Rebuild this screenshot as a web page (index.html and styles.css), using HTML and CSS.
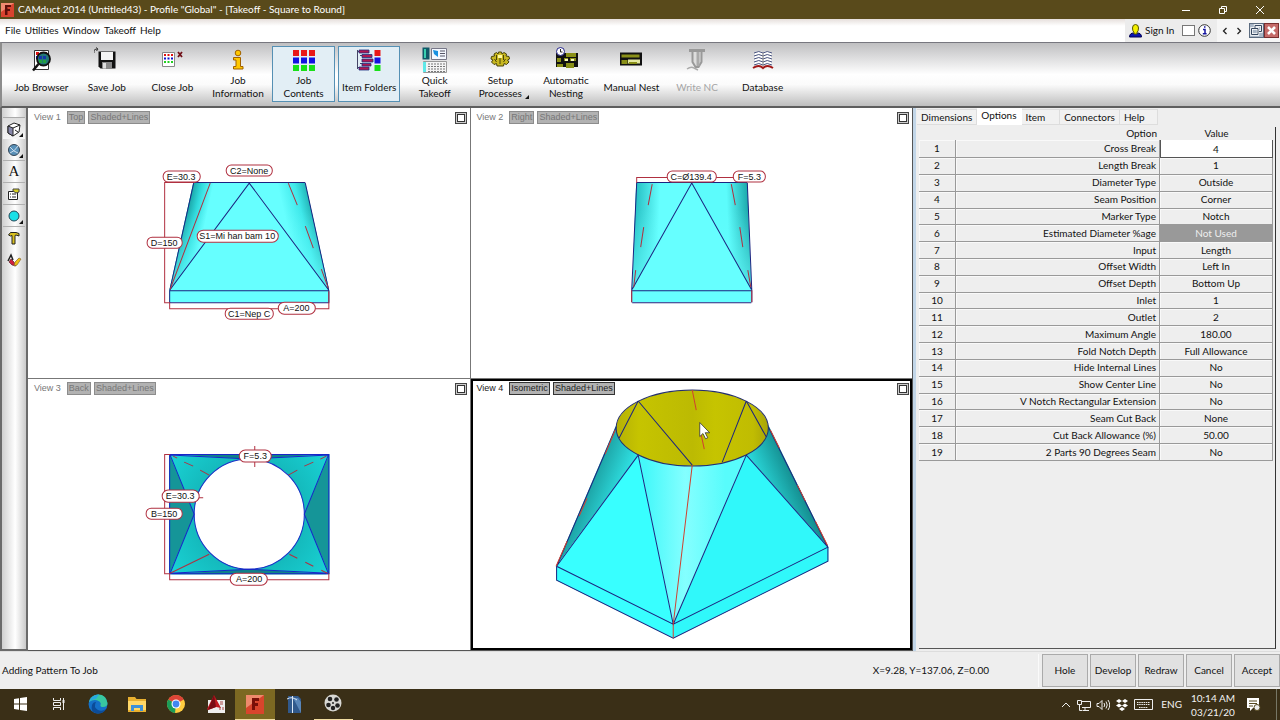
FILE: index.html
```html
<!DOCTYPE html>
<html lang="en">
<head>
<meta charset="utf-8">
<title>CAMduct 2014</title>
<link rel="stylesheet" href="styles.css">
</head>
<body>
<div class="app">
<header class="titlebar">
  <svg class="app-logo" viewBox="0 0 13 14"><rect width="13" height="14" fill="#d8432f"/><path d="M0 0h13L0 9z" fill="#f08a70"/><path d="M4 2h6v2H6.500v2H9v2H6.500v4H4z" fill="#5c0e0a"/></svg>
  <h1 class="title">CAMduct 2014 (Untitled43) - Profile "Global" - [Takeoff - Square to Round]</h1>
  <div class="win-controls">
    <button type="button" aria-label="Minimize"><svg viewBox="0 0 10 10"><path d="M1 5.500h8" stroke="#fff" fill="none"/></svg></button>
    <button type="button" aria-label="Restore"><svg viewBox="0 0 10 10"><path d="M1.500 3.500h5v5h-5zM3.500 3V1.500h5v5H7" stroke="#fff" fill="none"/></svg></button>
    <button type="button" aria-label="Close"><svg viewBox="0 0 10 10"><path d="M1 1l8 8M9 1L1 9" stroke="#fff" fill="none"/></svg></button>
  </div>
</header>

<nav class="menubar">
  <div class="menus">
    <button type="button">File</button><button type="button">Utilities</button><button type="button">Window</button><button type="button">Takeoff</button><button type="button">Help</button>
  </div>
  <div class="account">
    <button type="button" class="signin"><svg width="13" height="14" viewBox="0 0 13 14"><path d="M0.500 13c0-3 2-4 4-4h4c2 0 4 1 4 4z" fill="#0a14b0" stroke="#000050"/><path d="M3.500 4q0-3.500 3-3.500t3 3.500q0 3-1.500 4.500v1.500h-3V8.500Q3.500 7 3.500 4z" fill="#f4f000" stroke="#555500"/></svg>Sign In</button>
    <input class="blank" type="text" aria-label="Search">
    <button type="button" class="info" aria-label="Information"><svg width="13" height="13" viewBox="0 0 13 13"><circle cx="6.500" cy="6.500" r="5.800" fill="#fff" stroke="#333"/><path d="M5 5.500h2V9.500M4.800 9.700h3.800M6 3h1.500" stroke="#1414a0" stroke-width="1.500" fill="none"/></svg></button>
  </div>
  <div class="mdi">
    <button type="button" aria-label="Previous"><svg width="8" height="8" viewBox="0 0 8 8"><path d="M5.500 1L2.500 4l3 3" stroke="#222" stroke-width="1.300" fill="none"/></svg></button>
    <button type="button" aria-label="Next"><svg width="8" height="8" viewBox="0 0 8 8"><path d="M2.500 1l3 3-3 3" stroke="#222" stroke-width="1.300" fill="none"/></svg></button>
    <div class="mdi-pair">
    <button type="button" aria-label="Restore window"><svg width="15" height="15" viewBox="0 0 15 15"><rect x=".5" y=".5" width="14" height="14" fill="#a9b6c6" stroke="#5c6c80"/><path d="M6 5V2.500h6.500v6H10M2.500 5.500h6.500v6H2.500z" stroke="#fff" stroke-width="2.400" fill="none"/><path d="M6 5V2.500h6.500v6H10M2.500 5.500h6.500v6H2.500z" stroke="#34465e" fill="none"/></svg></button>
    <button type="button" aria-label="Close window"><svg width="15" height="15" viewBox="0 0 15 15"><rect x=".5" y=".5" width="14" height="14" fill="#c46a68" stroke="#7a3030"/><path d="M4 4l7 7M11 4l-7 7" stroke="#fff" stroke-width="2.600"/></svg></button>
    </div>
  </div>
</nav>

<div class="toolbar">
  <div class="tools">
    <button type="button" class="tool"><svg viewBox="0 0 26 26"><path d="M6.500 3.500h14v19h-14z" fill="#fff" stroke="#333"/><path d="M8 5h3v3H8z" fill="#e01010"/><path d="M12.500 5h3v3h-3zM17 5h2v3h-2z" fill="#e01010"/><path d="M8 9h3v3H8z" fill="#1010d0"/><circle cx="15.500" cy="12" r="6.500" fill="#277" stroke="#111" stroke-width="1.800"/><path d="M11 9h3v3h-3zM15 9h3v3h-3z" fill="#1436a8"/><path d="M11 13h3v3h-3zM15 13h3v3h-3z" fill="#20a040"/><path d="M10.500 17L5 23.500" stroke="#111" stroke-width="2.500"/></svg><span>Job Browser</span></button>
    <button type="button" class="tool"><svg viewBox="0 0 26 26"><path d="M4.500 4.500h17v17h-15l-2-2z" fill="#111"/><path d="M7 5h12v8H7z" fill="#f4f4f4"/><path d="M8 15h10v6.500H8z" fill="#888"/><path d="M9 16h3v5.500H9z" fill="#ddd"/><path d="M0 6V4q0-2 3-2M2 .5L4 2 2.500 4" stroke="#333" fill="none"/></svg><span>Save Job</span></button>
    <button type="button" class="tool"><svg viewBox="0 0 26 26"><path d="M3.500 5.500h12v14h-12z" fill="#fff" stroke="#888"/><path d="M5 7h2v2H5zM8.500 7h2v2h-2zM12 7h2v2h-2z" fill="#e01010"/><path d="M5 10.500h2v2H5zM8.500 10.500h2v2h-2zM12 10.500h2v2h-2z" fill="#1010d0"/><path d="M5 14h2v2H5zM8.500 14h2v2h-2zM12 14h2v2h-2z" fill="#20d020"/><path d="M19 5l4 5M23 5l-4 5" stroke="#701018" stroke-width="1.800"/></svg><span>Close Job</span></button>
    <button type="button" class="tool"><svg viewBox="0 0 26 26"><circle cx="13" cy="6" r="2.800" fill="#ffc800" stroke="#a06000"/><path d="M8.500 10.500h7v9H18v2.500H8.500v-2.500H11V13H8.500z" fill="#ffc800" stroke="#a06000"/></svg><span>Job<br>Information</span></button>
    <button type="button" class="tool pressed"><svg viewBox="0 0 26 26"><path d="M2 3h6v6H2zM10 3h6v6h-6zM18 3h6v6h-6z" fill="#e81818"/><path d="M2 10.500h6v6H2zM10 10.500h6v6h-6zM18 10.500h6v6h-6z" fill="#1212e0"/><path d="M2 18h6v6H2zM10 18h6v6h-6zM18 18h6v6h-6z" fill="#18e018"/></svg><span>Job<br>Contents</span></button>
    <button type="button" class="tool pressed"><svg viewBox="0 0 26 26"><path d="M1.500 3v19M1.500 4.500H4M1.500 20.500H4M4 8.500h3M4 16.500h3" stroke="#446" fill="none"/><path d="M3 3h10v3H3zM6 7.500h10v3H6zM6 12h11v3H6zM6 16.500h9v2.500H6zM3 20h10v3H3z" fill="#b01850" stroke="#203080" stroke-width=".8"/><path d="M18.500 3h6v6h-6z" fill="#e81818"/><path d="M18.500 10.500h6v6h-6z" fill="#1212e0"/><path d="M18.500 18h6v6h-6z" fill="#18e018"/></svg><span>Item Folders</span></button>
    <button type="button" class="tool"><svg viewBox="0 0 26 26"><path d="M.5.5h7v12h-7z" fill="#105868"/><path d="M2 2h2v9H2z" fill="#39d0b0"/><path d="M9.500 1.500h15v11h-15z" fill="#f4f8ff" stroke="#778"/><path d="M11 3l5 1v6l-4-3z" fill="#1890e0"/><path d="M18 4h5M18 6.500h5M18 9h5" stroke="#556"/><path d="M1.500 14.500h23v11h-23z" fill="#f4f4f4" stroke="#999"/><path d="M1 15h3v10H1z" fill="#60e8e8"/><path d="M6 17h18M6 19.500h18M6 22h18M6 24.500h18" stroke="#777" stroke-dasharray="2 1"/></svg><span>Quick<br>Takeoff</span></button>
    <button type="button" class="tool has-more"><svg viewBox="0 0 26 26"><path d="M11.500 5h3l.5 2 2-1.500 2.500 1.500-.5 2 3 .5.500 2.500-2 1 1.500 2-2.500 2.500-2.500-1-.5 2.500h-6.500l-.5-2.500-2.500 1L4.500 15 6 13l-2-1 .5-2.500 3-.5L7 7l2.500-1.500 1.500 1.500z" fill="#c8b820" stroke="#4a4408"/><path d="M9.500 8v5M16.500 8v5M13 11v6M7.500 12l2 3M18.500 12l-2 3" stroke="#4a4408"/><path d="M11 8h4v3h-4z" fill="#fff8a0"/></svg><span>Setup<br>Processes</span></button>
    <button type="button" class="tool"><svg viewBox="0 0 26 26"><path d="M3 6h22v14H3z" fill="#111"/><path d="M13 6h10v4H13zM4 11h4v4H4zM11 11h4v3h-4zM17 11h6v3h-6zM13 16h8v5h-8zM4 17h6v3H4z" fill="#8a9018"/><path d="M12 12h3v2h-3zM18 12h3v2h-3z" fill="#f8f8c0"/><circle cx="7.500" cy="4.500" r="4" fill="#fff" stroke="#22228a"/><path d="M7.500 2v3h2" stroke="#222" fill="none"/></svg><span>Automatic<br>Nesting</span></button>
    <button type="button" class="tool"><svg viewBox="0 0 26 26"><path d="M2 5.500h22v13H2z" fill="#111"/><path d="M3.500 7.500h18v3h-18zM3.500 13h6v4h-6z" fill="#8a9018"/><path d="M10 12.500h12v4H10z" fill="#e4e8a0"/><path d="M11 15h8v2h-8z" fill="#8a9018"/></svg><span>Manual Nest</span></button>
    <button type="button" class="tool" disabled><svg viewBox="0 0 26 26"><path d="M5 3.500h16" stroke="#999" stroke-width="3"/><path d="M8.500 5v10l3 5h3l3-5V5" stroke="#999" stroke-width="2" fill="#ddd"/><path d="M14 5v14" stroke="#aaa" stroke-width="3"/><path d="M3 22q4-3 7-1l4 2" stroke="#aaa" stroke-width="1.500" fill="none"/></svg><span>Write NC</span></button>
    <button type="button" class="tool"><svg viewBox="0 0 26 26"><path d="M4.500 5.500q5-3 8.500 0 3.500-3 8.500 0v14q-5-3-8.500 1-3.500-4-8.500-1z" fill="#fff"/><path d="M4 6q5-3 9 0 4-3 9 0M4 9q5-3 9 0 4-3 9 0M4 12q5-3 9 0 4-3 9 0M4 15q5-3 9 0 4-3 9 0M4 18q5-3 9 0 4-3 9 0" stroke="#45507c" fill="none"/><path d="M13 6v13" stroke="#888"/><path d="M3 21q6-4 10 0 4-4 10 0" stroke="#a01818" stroke-width="2" fill="none"/></svg><span>Database</span></button>
  </div>
</div>

<main class="workspace">
  <div class="sidebar">
    <button type="button" aria-label="View cube" class="more raised"><svg viewBox="0 0 16 16"><path d="M2 5l6-3 6 2-1 7-6 4-5-3z" fill="#fff" stroke="#222"/><path d="M2 5l5 2v8l-5-3z" fill="#88a" stroke="#222"/><path d="M7 7l7-3M9 9l3 2" stroke="#222"/></svg></button>
    <button type="button" aria-label="Shading" class="more ruled"><svg viewBox="0 0 16 16"><circle cx="8" cy="8" r="5.500" fill="#5890b8" stroke="#345"/><path d="M4 5q4 5 8 6M12 4q-3 5-8 7" stroke="#cde" fill="none"/></svg></button>
    <button type="button" aria-label="Text" class="ruled serif">A</button>
    <button type="button" aria-label="Properties" class="ruled"><svg viewBox="0 0 16 16"><path d="M2.500 5.500h9v8h-9z" fill="#fff" stroke="#222"/><path d="M4 8h1M6 8h4M4 11h1M6 11h4" stroke="#222"/><path d="M7 3h6v3l-3 1-3-2z" fill="#d8d020" stroke="#444"/></svg></button>
    <button type="button" aria-label="Colour" class="more ruled"><svg viewBox="0 0 16 16"><circle cx="8" cy="8" r="5" fill="#18e0e8" stroke="#245"/></svg></button>
    <button type="button" aria-label="Hammer"><svg viewBox="0 0 16 16"><path d="M2.500 5l2-2.500h5.500l3 1V6l-3-1-1 .5v8.500h-3V5.500L4.500 6z" fill="#d8c020" stroke="#222"/></svg></button>
    <button type="button" aria-label="Annotate"><svg viewBox="0 0 16 16"><path d="M2 9l3-6 2 5" stroke="#222" stroke-width="1.500" fill="none"/><path d="M3 10l2-3 3 3 2 4-4-1z" fill="#d02040" stroke="#411" stroke-width=".6"/><path d="M9 10l4-4 2 1-4 6-3 1z" fill="#f0c010" stroke="#863" stroke-width=".7"/></svg></button>
  </div>

  <div class="views">
    <section class="view">
      <div class="view-head"><span>View 1</span><button type="button">Top</button><button type="button">Shaded+Lines</button><button type="button" class="max" aria-label="Maximize view 1"></button></div>
      <svg class="drawing" viewBox="28 108 441 270">
        <defs>
          <linearGradient id="l1" gradientUnits="userSpaceOnUse" x1="188" y1="190" x2="211" y2="195"><stop offset="0" stop-color="#128f92"/><stop offset=".5" stop-color="#2fd8da"/><stop offset="1" stop-color="#66ffff"/></linearGradient>
          <linearGradient id="r1" gradientUnits="userSpaceOnUse" x1="310" y1="190" x2="280" y2="197"><stop offset="0" stop-color="#1aa6a8"/><stop offset=".45" stop-color="#3fe8ea"/><stop offset="1" stop-color="#66ffff"/></linearGradient>
          <linearGradient id="fade" x1="0" y1="0" x2="0" y2="1"><stop offset=".25" stop-color="#66ffff" stop-opacity="0"/><stop offset="1" stop-color="#66ffff" stop-opacity=".7"/></linearGradient>
        </defs>
        <path d="M193 183H305L329 291V302H169V291z" fill="#66ffff"/>
        <path d="M193 183H249L169 291z" fill="url(#l1)"/><path d="M305 183H249L329 291z" fill="url(#r1)"/>
        <path d="M193 183H305L329 291H169z" fill="url(#fade)"/>
        <path class="edge" d="M193.500 183L169.500 290.500V302M305 183L328.500 290.500V302M193 182.500H305M169 290.500H329M169 302.500H329M169.500 290L249 183L328.500 290"/>
        <path class="dim" d="M210 183L170 289M288 183l9 22M305 226l8 22M321 269l7 19M195 182.500H164.500V302.500H170M169.500 302V308.500H329M328.500 291V309"/>
        <g class="tag"><rect x="226" y="165" width="46" height="11" rx="5"/><text x="249" y="174">C2=None</text>
        <rect x="163" y="171" width="37" height="11" rx="5"/><text x="181" y="180">E=30.3</text>
        <rect x="197" y="230" width="81" height="12" rx="6"/><text x="237" y="239">S1=Mi han bam 10</text>
        <rect x="147" y="237" width="35" height="11" rx="5"/><text x="164" y="246">D=150</text>
        <rect x="225" y="308" width="48" height="11" rx="5"/><text x="249" y="317">C1=Nep C</text>
        <rect x="278" y="302" width="37" height="12" rx="6"/><text x="296" y="311">A=200</text></g>
      </svg>
    </section>
    <section class="view">
      <div class="view-head"><span>View 2</span><button type="button">Right</button><button type="button">Shaded+Lines</button><button type="button" class="max" aria-label="Maximize view 2"></button></div>
      <svg class="drawing" viewBox="471 108 441 270">
        <defs>
          <linearGradient id="l2" gradientUnits="userSpaceOnUse" x1="634" y1="190" x2="660" y2="191"><stop offset="0" stop-color="#22bcc0"/><stop offset="1" stop-color="#66ffff"/></linearGradient>
          <linearGradient id="r2" gradientUnits="userSpaceOnUse" x1="750" y1="190" x2="726" y2="191"><stop offset="0" stop-color="#159fa2"/><stop offset="1" stop-color="#5cfcfc"/></linearGradient>
        </defs>
        <path d="M636 183H747L751 290V302H632V290z" fill="#66ffff"/>
        <path d="M636 183H691L632 290z" fill="url(#l2)"/><path d="M747 183H691L751 290z" fill="url(#r2)"/>
        <path d="M636 183H747L751 290H632z" fill="url(#fade)"/>
        <path class="edge" d="M636.500 183L631.500 290.500V302M747 183L751.500 290.500V302M636 182.500H747M632 290.500H751M632 302.500H751M632 289L691.500 183L751 289"/>
        <path class="dim" d="M652 184l-4 21M643.500 227l-3 20M635.500 270l-2 17M731 184l4 21M739.500 227l3 20M747.500 270l3 17M636.500 183V177.500H740M631.500 290v12M751.500 290v12"/>
        <g class="tag"><rect x="667" y="171" width="49" height="11" rx="5"/><text x="691" y="180">C=Ø139.4</text>
        <rect x="733" y="171" width="32" height="11" rx="5"/><text x="749" y="180">F=5.3</text></g>
      </svg>
    </section>
    <section class="view">
      <div class="view-head"><span>View 3</span><button type="button">Back</button><button type="button">Shaded+Lines</button><button type="button" class="max" aria-label="Maximize view 3"></button></div>
      <svg class="drawing" viewBox="28 379 441 270">
        <defs><radialGradient id="c3" gradientUnits="userSpaceOnUse" cx="249" cy="514" r="96"><stop offset=".55" stop-color="#14b8bb"/><stop offset="1" stop-color="#19d2d4"/></radialGradient></defs>
        <path d="M169 454H329V574H169z" fill="url(#c3)"/>
        <path d="M169 454L194 514L169 574zM329 454L304 514L329 574z" fill="#159598"/>
        <path d="M169 454L249 459L329 454zM169 574L249 569L329 574z" fill="#0f8288"/>
        <circle cx="249" cy="514" r="55" fill="#fff" stroke="#1c2ec8"/>
        <path class="blue" d="M169.500 454.500H328.500V573.500H169.500zM170 455L194 514L170 573M328 455L304 514L328 573M170 455L249 459L328 455M170 573L249 569L328 573"/>
        <path class="dim" d="M173 456l4 2M184 462l9 4M200 470l9 5M326 456l-6 3M313 462l-9 4M297 470l-9 5M170 573L209 554M289 554l8 4M305 562l8 4M321 570l6 3M170 454.500H164.500V573.500H170M169.500 573V579.500H328.500V573M254.500 446v21M194 497.500h9"/>
        <g class="tag"><rect x="239" y="450" width="32" height="12" rx="6"/><text x="255" y="459">F=5.3</text>
        <rect x="162" y="490" width="37" height="12" rx="6"/><text x="180" y="499">E=30.3</text>
        <rect x="146" y="508" width="36" height="11" rx="5"/><text x="164" y="517">B=150</text>
        <rect x="230" y="573" width="37" height="12" rx="6"/><text x="249" y="582">A=200</text></g>
      </svg>
    </section>
    <section class="view active">
      <div class="view-head"><span>View 4</span><button type="button">Isometric</button><button type="button">Shaded+Lines</button><button type="button" class="max" aria-label="Maximize view 4"></button></div>
      <svg class="drawing" viewBox="473 381 437 266">
        <defs>
          <linearGradient id="l4" gradientUnits="userSpaceOnUse" x1="588" y1="478" x2="622" y2="492"><stop offset="0" stop-color="#1a9a9c"/><stop offset="1" stop-color="#30e4e6"/></linearGradient>
          <linearGradient id="m4" gradientUnits="userSpaceOnUse" x1="645" y1="500" x2="725" y2="500"><stop offset="0" stop-color="#45f8fa"/><stop offset=".5" stop-color="#84ffff"/><stop offset="1" stop-color="#58fcfc"/></linearGradient>
          <linearGradient id="r4" gradientUnits="userSpaceOnUse" x1="804" y1="490" x2="764" y2="508"><stop offset="0" stop-color="#128688"/><stop offset="1" stop-color="#2ee8ea"/></linearGradient>
          <linearGradient id="y4" x1="0" y1="0" x2="1" y2="0"><stop offset="0" stop-color="#b4b006"/><stop offset=".15" stop-color="#c6c400"/><stop offset=".5" stop-color="#bcba02"/><stop offset=".65" stop-color="#c6c400"/><stop offset=".9" stop-color="#c0bc02"/><stop offset="1" stop-color="#a8a408"/></linearGradient>
        </defs>
        <path d="M616 425L638 455L556 566z" fill="url(#l4)"/>
        <path d="M768 425L746 455L828 547z" fill="url(#r4)"/>
        <path d="M638 455L556 566V580L673 638V624z" fill="#38ffff"/>
        <path d="M746 455L828 547V561L673 638V624z" fill="#30f8fa"/>
        <path d="M638 455L692 466L746 455L673 624z" fill="url(#m4)"/>
        <ellipse cx="692" cy="428" rx="76" ry="38" fill="url(#y4)" stroke="#26306e"/>
        <path class="edge" d="M616 427L556.500 566V580L673 638L827.500 561V547L768 427M638 455L556.500 566L673 624L827.500 547L746 455L673 624zM638 401L692 465M638 401L619 438M746 401L722 462M746 401L766 437"/>
        <path class="seam" d="M692 465L673 624V638M692 390l4 20M701 435l3 14M615 430l-10 24M587 498l-8 18M567 541l-11 25M770 430l9 18M797 485l8 16M815 521l12 24"/>
        <path d="M699.500 422.500v14l3.200-3 2.600 5.200 2.200-1-2.600-5h4.500z" fill="#fff" stroke="#333" stroke-width=".8"/>
      </svg>
    </section>
  </div>

  <aside class="panel">
    <div class="tabs" role="tablist">
      <button type="button" role="tab">Dimensions</button><button type="button" role="tab" aria-selected="true" class="current">Options</button><button type="button" role="tab" class="wide">Item</button><button type="button" role="tab">Connectors</button><button type="button" role="tab" class="last">Help</button>
    </div>
    <div class="sheet">
      <table class="options">
        <colgroup><col class="c-num"><col><col class="c-val"></colgroup>
        <thead><tr><th></th><th>Option</th><th>Value</th></tr></thead>
        <tbody>
        <tr><td>1</td><td><label for="cross">Cross Break</label></td><td class="edit"><input id="cross" type="text" value="4"></td></tr>
        <tr><td>2</td><td>Length Break</td><td>1</td></tr>
        <tr><td>3</td><td>Diameter Type</td><td>Outside</td></tr>
        <tr><td>4</td><td>Seam Position</td><td>Corner</td></tr>
        <tr><td>5</td><td>Marker Type</td><td>Notch</td></tr>
        <tr><td>6</td><td>Estimated Diameter %age</td><td class="unused">Not Used</td></tr>
        <tr><td>7</td><td>Input</td><td>Length</td></tr>
        <tr><td>8</td><td>Offset Width</td><td>Left In</td></tr>
        <tr><td>9</td><td>Offset Depth</td><td>Bottom Up</td></tr>
        <tr><td>10</td><td>Inlet</td><td>1</td></tr>
        <tr><td>11</td><td>Outlet</td><td>2</td></tr>
        <tr><td>12</td><td>Maximum Angle</td><td>180.00</td></tr>
        <tr><td>13</td><td>Fold Notch Depth</td><td>Full Allowance</td></tr>
        <tr><td>14</td><td>Hide Internal Lines</td><td>No</td></tr>
        <tr><td>15</td><td>Show Center Line</td><td>No</td></tr>
        <tr><td>16</td><td>V Notch Rectangular Extension</td><td>No</td></tr>
        <tr><td>17</td><td>Seam Cut Back</td><td>None</td></tr>
        <tr><td>18</td><td>Cut Back Allowance (%)</td><td>50.00</td></tr>
        <tr><td>19</td><td>2 Parts 90 Degrees Seam</td><td>No</td></tr>
        </tbody>
      </table>
    </div>
  </aside>
</main>

<footer class="status">
  <span class="message">Adding Pattern To Job</span>
  <span class="coords">X=9.28, Y=137.06, Z=0.00</span>
  <div class="actions"><button type="button">Hole</button><button type="button">Develop</button><button type="button">Redraw</button><button type="button">Cancel</button><button type="button">Accept</button></div>
</footer>

<div class="taskbar">
  <div class="apps">
    <button type="button" aria-label="Start"><svg viewBox="0 0 20 20"><path d="M4 5l5-.8v5.300H4zM10 4l7-1v6.500h-7zM4 10.500h5v5.300L4 15zM10 10.500h7V17l-7-1z" fill="#fff"/></svg></button>
    <button type="button" aria-label="Task view"><svg viewBox="0 0 20 20"><path d="M4.500 4v2.500h7V4M4.500 16v-2.500h7V16M4.500 8.500h7v3h-7zM14.500 4v12" stroke="#eee" fill="none"/><path d="M13.500 6h2v3h-2z" fill="#eee"/></svg></button>
    <button type="button" aria-label="Edge"><svg viewBox="0 0 20 20"><circle cx="10" cy="10" r="9.500" fill="#1470c8"/><path d="M1 8Q3 .5 10.500.5T19.500 9q0 4-4.500 4-3 0-2.500-2 1-2-1-3.500Q6 4.500 1 8z" fill="#38c8a0"/><path d="M1 8Q4 1 11 .600L8 5Q4 5 1 8z" fill="#28a8e0"/><path d="M8 8q-3 5 2 8 4 2 8-1-3 5-9 4.500Q2 18 4 11q1-3 4-3z" fill="#0c4c98"/></svg></button>
    <button type="button" aria-label="File Explorer"><svg viewBox="0 0 20 20"><path d="M1 3h7l1.500 2H19v13H1z" fill="#e8b030"/><path d="M1 7h18v9H1z" fill="#ffd868"/><path d="M4 11h12v6h-3v-3H7v3H4z" fill="#3c90d8"/></svg></button>
    <button type="button" aria-label="Chrome"><svg viewBox="0 0 20 20"><circle cx="10" cy="10" r="9" fill="#ffcd40"/><path d="M10 10L2.200 5.500A9 9 0 0 1 17.800 5.500z" fill="#dc4437"/><path d="M10 10L2.200 5.500A9 9 0 0 0 9 19z" fill="#1a9c58"/><circle cx="10" cy="10" r="4.500" fill="#fff"/><circle cx="10" cy="10" r="3.400" fill="#4286f0"/></svg></button>
    <button type="button" aria-label="AutoCAD"><svg viewBox="0 0 20 20"><path d="M2 6h17v13H2z" fill="#eee"/><path d="M1 15L8 1l7 13-5-1-8 3z" fill="#c01820"/><path d="M8 1l2 12-8 3z" fill="#780c14"/><path d="M14 8h3M14 10h3M14 13v3M17 13v3" stroke="#a44"/></svg></button>
    <button type="button" aria-label="CAMduct" class="running on"><svg viewBox="0 0 20 20"><path d="M1 1h18v19H1z" fill="#d8452c"/><path d="M1 1h18L1 14z" fill="#ee8a6c"/><path d="M7 4h7v3h-4v2h3v3h-3v4H7z" fill="#781008"/></svg></button>
    <button type="button" aria-label="Design tool"><svg viewBox="0 0 20 20"><path d="M4 2h10l3 3v14H4z" fill="#31598c"/><path d="M9 4h5l3 4v11z" fill="#5a86b8"/><path d="M8.500 2v17M3 5q5-3 10 1" stroke="#dde8f4" fill="none"/></svg></button>
    <button type="button" aria-label="Media player" class="running"><svg viewBox="0 0 20 20"><circle cx="10" cy="9" r="8.500" fill="#d8d8d4"/><g fill="#222"><circle cx="7" cy="5" r="2.300"/><circle cx="13.500" cy="5.500" r="2.300"/><circle cx="5.500" cy="11" r="2.300"/><circle cx="14.500" cy="11.500" r="2.300"/><circle cx="10" cy="14" r="2.200"/><circle cx="10" cy="9" r="1"/></g></svg></button>
  </div>
  <div class="tray">
    <button type="button" aria-label="Show hidden icons"><svg width="12" height="14" viewBox="0 0 12 14"><path d="M2 9l4-4 4 4" stroke="#eee" fill="none"/></svg></button>
    <svg width="14" height="14" viewBox="0 0 14 14"><path d="M5 3.500h8.500v6H5M8 9.500v3M6 12.500h6M.5 2.500h4v4h-4zM2.500 6.500v6h3" stroke="#eee" fill="none"/></svg>
    <svg width="14" height="14" viewBox="0 0 14 14"><path d="M1 5.500h2l3-3v9l-3-3H1zM8 5q1.500 2 0 4M10 3.500q2.500 3.500 0 7M12 2q3.500 5 0 10" stroke="#eee" fill="none"/></svg>
    <svg width="14" height="14" viewBox="0 0 14 14"><path d="M4 1l3 2-3 2-3-2zM10 1l3 2-3 2-3-2zM4 5.500l3 2-3 2-3-2zM10 5.500l3 2-3 2-3-2zM7 9l3 2-3 2-3-2z" fill="#fff"/></svg>
    <svg width="19" height="14" viewBox="0 0 19 14"><path d="M.5 1.500h18v10H.5z" stroke="#eee" fill="none"/><path d="M3 4.500h13M3 6.500h13M5 9.500h9" stroke="#eee" stroke-dasharray="1.500 .7"/></svg>
    <span class="lang">ENG</span>
    <time class="clock">10:14 AM<br>03/21/20</time>
    <button type="button" aria-label="Notifications" class="notes"><svg width="15" height="15" viewBox="0 0 15 15"><path d="M1 1h12v10H7l-3 3v-3H1z" fill="#fff"/><path d="M3 4h8M3 6.500h8M3 9h4" stroke="#554820"/><circle cx="11" cy="10.500" r="3" fill="#eee" stroke="#554820"/></svg></button>
  </div>
</div>
</div>
</body>
</html>
```

FILE: styles.css
```css
* { box-sizing: border-box; }
body {
  margin: 0;
  font-family: Lato, Roboto, sans-serif;
  font-size: 10px;
  line-height: 13px;
  color: #111;
}
button, input {
  font: inherit;
  color: inherit;
  border: 0;
  margin: 0;
  padding: 0;
  background: none;
}
svg { display: block; }
.app { display: flex; flex-direction: column; min-height: 100vh; background: #eee; }

/* Title and menus */
.titlebar { display: flex; align-items: center; gap: 4px; height: 19px; padding-left: 1px; background: #594a1b; color: #fff; }
.app-logo { width: 13px; height: 14px; }
.title { flex: 1; margin: 0; font-size: 10px; font-weight: 400; }
.win-controls { display: flex; padding-right: 2px; }
.win-controls button { width: 37px; display: flex; justify-content: center; }
.win-controls svg { width: 10px; height: 10px; }
.menubar { display: flex; height: 23px; background: linear-gradient(#e6dfdc, #fff 30%, #fff); }
.menus { flex: 1; display: flex; align-items: center; padding-left: 3px; }
.menus button { padding: 0 2px; }
.account { display: flex; align-items: center; gap: 3px; width: 92px; padding-left: 4px; background: #ececec; }
.signin { display: flex; align-items: center; gap: 3px; flex: 1; white-space: nowrap; }
.blank { width: 13px; height: 11px; background: #fff; border: 1px solid #777; }
.info { margin-right: 6px; }
.mdi { display: flex; align-items: center; gap: 6px; padding: 0 1px 0 4px; background: #f6f6f6; }
.mdi-pair { display: flex; }

/* Main toolbar */
.toolbar {
  display: flex;
  height: 66px;
  padding: 3px 5px 3px 8px;
  border-top: 1px solid #77777f;
  border-bottom: 2px solid #5e5e5e;
  border-left: 2px solid #8c8c8c;
  background: linear-gradient(#bfbfc1, #fff 50%, #fbfbfb 66%, #bebebe);
}
.tools { flex: 0 1 784px; display: flex; gap: 3px; }
.tool {
  position: relative;
  flex: 1 1 0;
  min-width: 0;
  height: 56px;
  display: flex;
  flex-direction: column;
  align-items: center;
  border: 1px solid transparent;
}
.tool svg { width: 26px; height: 26px; flex: none; }
.tool span { flex: 1; display: flex; align-items: center; white-space: nowrap; text-align: center; }
.tool:disabled { color: #a5a5a5; }
.pressed { border-color: #5590b4; background: #e2eef5; }
.has-more::after, .more::after {
  content: "";
  position: absolute;
  right: 2px;
  bottom: 2px;
  border-left: 4px solid transparent;
  border-bottom: 4px solid #111;
}

/* Workspace */
.workspace { flex: 1; display: grid; grid-template-columns: 28px minmax(0, 1fr) 367px; }
.sidebar {
  display: flex;
  flex-direction: column;
  padding: 9px 1px 0;
  border: 2px solid #6a6a6a;
  border-top: 0;
  background: linear-gradient(90deg, #cfcfcf, #fff 55%, #cacaca);
}
.sidebar button { position: relative; height: 22px; display: flex; align-items: center; justify-content: center; }
.sidebar svg { width: 16px; height: 16px; }
.sidebar .raised { border-top: 1px solid #aaa; background: linear-gradient(#ddd, #f6f6f6); }
.sidebar .ruled { border-bottom: 1px solid #b0b0b0; }
.sidebar .serif { font: 15px "Liberation Serif", serif; }
.views { display: grid; grid-template: 1fr 1fr / 1fr 1fr; gap: 1px; background: #777; border-right: 1px solid #555; border-bottom: 1px solid #555; }
.view { display: grid; min-width: 0; min-height: 0; background: #fff; }
.view.active { border: 2px solid #000; }
.view > * { grid-area: 1 / 1; }
.view-head {
  z-index: 1;
  align-self: start;
  display: flex;
  align-items: center;
  gap: 3px;
  padding: 3px 3px 0 6px;
  font: 9px/11px "Liberation Sans", Arial, sans-serif;
  color: #777;
}
.view-head span { margin-right: 3px; }
.view-head button { padding: 0 1px; border: 1px solid #8c8c8c; background: #b2b2b2; }
.view-head .max { width: 12px; height: 12px; margin-left: auto; background: #fff; border: 1px solid #444; box-shadow: inset 0 0 0 1px #ccc, inset 0 0 0 2px #333; }
.active .view-head { padding: 1px 1px 0 4px; color: #222; }
.active .view-head button:not(.max) { border-color: #333; }
.drawing { width: 100%; height: 100%; min-height: 0; }
.edge, .blue, .dim, .seam { fill: none; stroke-width: 1; }
.edge { stroke: #1c2480; }
.blue { stroke: #1826c8; }
.dim { stroke: #b03040; }
.seam { stroke: #d04030; }
.tag rect { fill: #fff; stroke: #b03040; }
.tag text { font: 9px "Liberation Sans", Arial, sans-serif; text-anchor: middle; fill: #111; }

/* Options panel */
.panel { display: flex; flex-direction: column; min-width: 0; border-left: 3px solid #c2d6e8; background: #eee; }
.tabs { display: flex; align-items: flex-end; height: 17px; padding-left: 1px; }
.tabs button { height: 16px; padding: 0 4px; border: 1px solid #ddd; border-left: 0; background: #f1f1f1; }
.tabs .current { height: 17px; padding: 0 4px 2px; background: #fff; border-color: #fff; }
.tabs .wide { padding-right: 14px; }
.tabs .last { padding-right: 12px; }
.sheet { flex: 1; margin: 2px 4px 2px 3px; border-right: 1px solid #333; border-bottom: 1px solid #555; }
.options { width: calc(100% - 2px); height: 334px; border-collapse: separate; border-spacing: 0; table-layout: fixed; }
.c-num { width: 37px; }
.c-val { width: 113px; }
.options th, .options td { padding: 0; font-weight: 400; text-align: center; line-height: 13px; }
.options td { border-right: 1px solid #999; border-bottom: 1px solid #999; box-shadow: inset 1px 1px #f9f9f9; }
.options th:nth-child(2), .options td:nth-child(2) { text-align: right; padding-right: 3px; }
.options .edit { background: #fff; border-color: #555; box-shadow: inset 1px 0 #555; }
.edit input { display: block; width: calc(100% - 2px); height: 14px; margin-left: 1px; text-align: center; }
.options .unused { background: #999; color: #eee; box-shadow: none; }

/* Status bar */
.status { display: flex; align-items: center; height: 38px; padding-left: 2px; border-top: 1px solid #ddd; background: #eee; }
.message { flex: 1; }
.coords { margin-right: 49px; }
.actions { display: flex; gap: 2px; padding-left: 3px; border-left: 1px solid #fafafa; }
.actions button { width: 46px; height: 33px; border: 1px solid #aaa; background: #e1e1e1; }

/* Taskbar */
.taskbar { display: flex; justify-content: space-between; height: 32px; background: #3a2f17; color: #f2f2f2; }
.apps { flex: 0 1 353px; display: flex; }
.apps button { flex: 1; display: flex; align-items: center; justify-content: center; border-bottom: 2px solid transparent; }
.apps svg { width: 20px; height: 20px; }
.apps .running { border-bottom-color: #f0dca0; }
.apps .on { background: #7c6822; }
.tray { display: flex; align-items: center; gap: 5px; padding-right: 3px; }
.lang { margin-left: 3px; }
.clock { margin-left: 4px; text-align: center; line-height: 14px; white-space: nowrap; }
.notes { height: 32px; margin-left: 6px; padding-right: 15px; border-right: 1px solid #776; }
```
